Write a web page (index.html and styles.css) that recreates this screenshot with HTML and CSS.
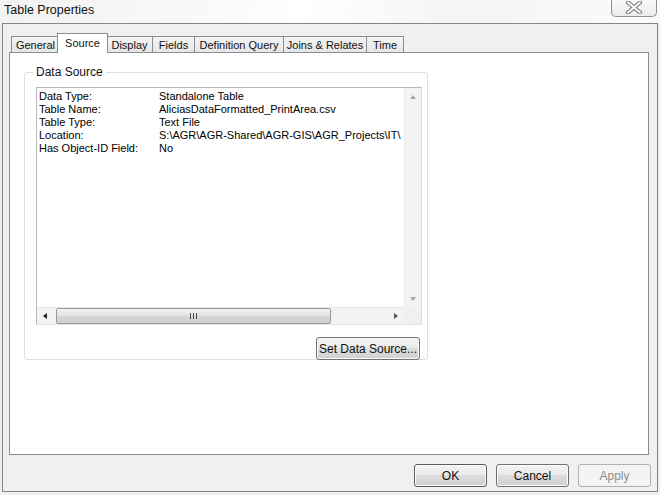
FILE: index.html
```html
<!DOCTYPE html>
<html lang="en">
<head>
    <meta charset="UTF-8" />
    <title>Table Properties</title>
    <link rel="stylesheet" href="styles.css">
</head>
<body>
    <!-- Title bar -->
    <div class="titlebar">
        <span class="title">Table Properties</span>
        <button class="close-btn" title="Close">
            <svg width="18" height="13" viewBox="0 0 18 13">
                <path d="M3 1.5 L15 11.5 M15 1.5 L3 11.5" stroke="#7a7a7a" stroke-width="4.2" stroke-linecap="round"/>
                <path d="M3 1.5 L15 11.5 M15 1.5 L3 11.5" stroke="#ffffff" stroke-width="2" stroke-linecap="round"/>
            </svg>
        </button>
    </div>

    <div class="frame">
        <!-- Tabs -->
        <div class="tabs">
            <div class="tab tab-general">General</div>
            <div class="tab tab-source active">Source</div>
            <div class="tab tab-display">Display</div>
            <div class="tab tab-fields">Fields</div>
            <div class="tab tab-defq">Definition Query</div>
            <div class="tab tab-joins">Joins &amp; Relates</div>
            <div class="tab tab-time">Time</div>
        </div>

        <div class="panel">
            <fieldset class="group">
                <legend>Data Source</legend>

                <div class="listbox">
                    <div class="list-content">
                        <div class="row"><span class="key">Data Type:</span><span>Standalone Table</span></div>
                        <div class="row"><span class="key">Table Name:</span><span>AliciasDataFormatted_PrintArea.csv</span></div>
                        <div class="row"><span class="key">Table Type:</span><span>Text File</span></div>
                        <div class="row"><span class="key">Location:</span><span>S:\AGR\AGR-Shared\AGR-GIS\AGR_Projects\IT\</span></div>
                        <div class="row"><span class="key">Has Object-ID Field:</span><span>No</span></div>
                    </div>
                    <div class="vscroll">
                        <span class="arrow up"></span>
                        <span class="arrow down"></span>
                    </div>
                    <div class="hscroll">
                        <span class="arrow left"></span>
                        <div class="thumb"><span class="grip"></span></div>
                        <span class="arrow right"></span>
                    </div>
                    <div class="corner"></div>
                </div>

                <div class="group-actions">
                    <button class="btn btn-wide">Set Data Source...</button>
                </div>
            </fieldset>
        </div>

        <!-- Dialog buttons -->
        <div class="button-row">
            <button class="btn btn-default">OK</button>
            <button class="btn">Cancel</button>
            <button class="btn" disabled>Apply</button>
        </div>
    </div>
</body>
</html>
```

FILE: styles.css
```css
body {
    margin: 0;
    width: 660px;
    height: 495px;
    overflow: hidden;
    background: #f0f0f0;
    font-family: "Liberation Sans", Arial, sans-serif;
    color: #000;
}

/* Title bar */
.titlebar {
    height: 23px;
    display: flex;
    align-items: flex-start;
    background: linear-gradient(100deg, #f2f2f2 0%, #fafafa 35%, #ffffff 45%, #f4f4f4 70%, #fbfbfb 100%);
}

.title {
    font-size: 12.5px;
    padding: 3px 0 0 4px;
    color: #111;
}

.close-btn {
    margin-left: auto;
    margin-right: 3px;
    width: 46px;
    height: 18px;
    margin-top: -1px;
    padding: 0;
    border: 1px solid #8e8f8f;
    border-top: none;
    border-radius: 0 0 5px 5px;
    background: linear-gradient(#fafafa, #ececec);
    display: flex;
    align-items: center;
    justify-content: center;
}

/* Dialog frame */
.frame {
    margin-left: 2px;
    width: 654px;
    height: 467px;
    border: 1px solid #858585;
    background: #f0f0f0;
}

.tabs {
    display: flex;
    align-items: flex-end;
    padding: 9px 0 0 8px;
    height: 19px;
    position: relative;
    z-index: 1;
}

.tab {
    box-sizing: border-box;
    height: 16px;
    line-height: 16px;
    text-align: center;
    font-size: 11px;
    color: #111;
    border: 1px solid #898c95;
    border-bottom: none;
    margin-right: -1px;
    background: linear-gradient(#f5f5f5, #e6e6e6);
    white-space: nowrap;
}

.tab-general { width: 49px; }
.tab-source { width: 51px; }
.tab-display { width: 47px; }
.tab-fields { width: 43px; }
.tab-defq { width: 90px; }
.tab-joins { width: 84px; }
.tab-time { width: 38px; }

.tab.active {
    height: 20px;
    line-height: 18px;
    margin: 0 -2px -1px -2px;
    background: #fff;
    position: relative;
}

.panel {
    margin-left: 6px;
    width: 638px;
    height: 401px;
    border: 1px solid #898c95;
    background: #fff;
}

/* Group box */
.group {
    margin: 12px 0 0 14px;
    padding: 0;
    width: 402px;
    height: 293px;
    border: 1px solid #d5dfe5;
    border-radius: 3px;
}

.group legend {
    font-size: 12px;
    line-height: 14px;
    padding: 0 3px;
    margin-left: 8px;
    color: #111;
}

.listbox {
    margin: 8px 0 0 11px;
    width: 384px;
    height: 236px;
    border: 1px solid #b9b9b9;
    border-right-color: #dcdcdc;
    border-bottom-color: #e3e3e3;
    display: grid;
    grid-template-columns: 1fr 17px;
    grid-template-rows: 1fr 17px;
    overflow: hidden;
}

.list-content {
    padding: 2px 0 0 2px;
    font-size: 11px;
    line-height: 13px;
    overflow: hidden;
    white-space: nowrap;
}

.row {
    display: flex;
}

.key {
    width: 120px;
    flex: none;
}

.vscroll {
    background: #f3f3f3;
    border-left: 1px solid #e9e9e9;
    display: flex;
    flex-direction: column;
    justify-content: space-between;
    align-items: center;
    padding: 7px 0 6px;
}

.hscroll {
    background: #f3f3f3;
    border-top: 1px solid #e9e9e9;
    display: flex;
    align-items: center;
    padding-left: 6px;
}

.corner {
    background: #f0f0f0;
}

.arrow {
    width: 0;
    height: 0;
    border: 3px solid transparent;
}

.arrow.up {
    border-bottom: 4px solid #a8a8a8;
    border-top: none;
}

.arrow.down {
    border-top: 4px solid #a8a8a8;
    border-bottom: none;
}

.arrow.left {
    border-right: 4px solid #222;
    border-left: none;
}

.arrow.right {
    border-left: 4px solid #555;
    border-right: none;
    margin-left: 63px;
}

.thumb {
    margin-left: 9px;
    width: 273px;
    height: 14px;
    border: 1px solid #9a9a9a;
    border-radius: 2px;
    background: linear-gradient(#f3f3f3, #e2e2e2 50%, #d6d6d6 51%, #d0d0d0);
    display: flex;
    justify-content: center;
    align-items: center;
}

.grip {
    width: 7px;
    height: 6px;
    background: repeating-linear-gradient(90deg, #4b4b4b 0 1px, transparent 1px 3px);
}

.group-actions {
    display: flex;
    justify-content: flex-end;
    padding: 12px 7px 0 0;
}

/* Buttons */
.btn {
    width: 73px;
    height: 23px;
    padding: 0;
    font-family: "Liberation Sans", Arial, sans-serif;
    font-size: 12px;
    color: #111;
    border: 1px solid #707070;
    border-radius: 3px;
    background: linear-gradient(#f2f2f2 0%, #ebebeb 45%, #dddddd 50%, #cfcfcf 100%);
    box-shadow: inset 0 0 0 1px #fcfcfc;
}

.btn-wide {
    width: 104px;
}

.btn-default {
    border-color: #5a5a5a;
}

.btn:disabled {
    color: #8d8d8d;
    border-color: #adb2b5;
    background: #f4f4f4;
    box-shadow: none;
}

.button-row {
    display: flex;
    justify-content: flex-end;
    gap: 9px;
    padding: 9px 6px 0 0;
}
```
